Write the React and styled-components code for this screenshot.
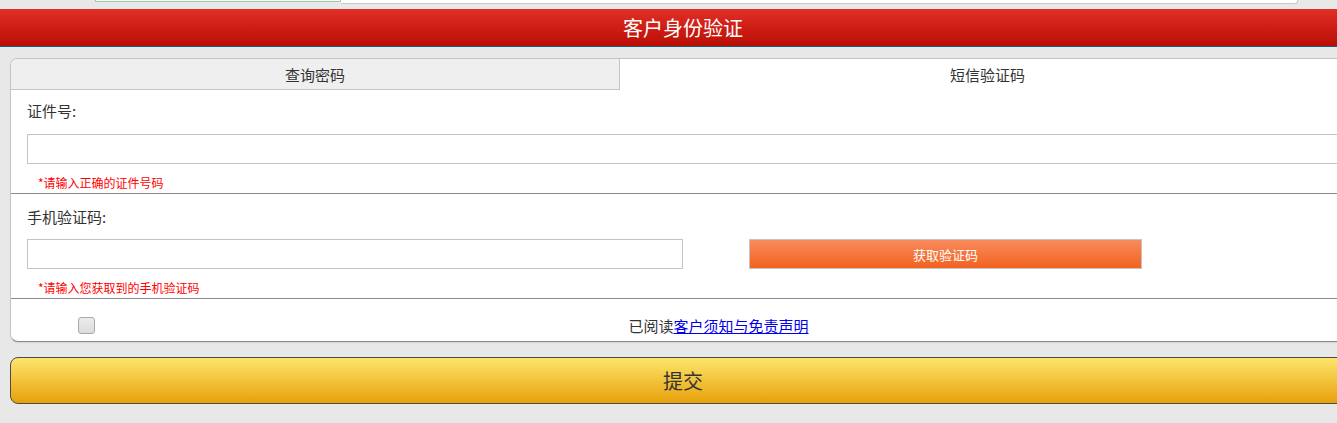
import React from 'react';
import styled, { createGlobalStyle } from 'styled-components';

const GlobalStyle = createGlobalStyle`
  html, body {
    margin: 0;
    padding: 0;
    background: #e8e8e8;
    overflow: hidden;
  }
  body {
    font-family: "Noto Sans CJK SC", "Liberation Sans", sans-serif;
    color: #333;
  }
`;

const Page = styled.div`
  width: 1366px;
`;

const TopStrip = styled.div`
  height: 9px;
  display: flex;
  align-items: flex-start;
  padding-left: 95px;
`;

const SearchBox = styled.div`
  width: 244px;
  height: 1px;
  border: 1px solid #9fd09a;
  border-top: none;
  background: #fff;
`;

const NavBox = styled.div`
  width: 956px;
  height: 3px;
  background: #fff;
  border-bottom: 1px solid #c8c8c8;
  border-right: 1px solid #c8c8c8;
  border-bottom-right-radius: 3px;
`;

const Header = styled.div`
  height: 37px;
  background: linear-gradient(#e12f26, #ba0e04);
  border-bottom: 1px solid #1a5d7c;
  color: #fff;
  font-size: 20px;
  display: flex;
  align-items: center;
  justify-content: center;
`;

const Content = styled.div`
  padding: 11px 10px 0;
`;

const Card = styled.div`
  background: #fff;
  border: 1px solid #c4c4c4;
  border-bottom-color: #888;
  border-radius: 7px 7px 8px 8px;
  box-shadow: 0 1px 1px rgba(0, 0, 0, 0.08);
  overflow: hidden;
`;

const Tabs = styled.div`
  display: flex;
  height: 31px;
`;

const Tab = styled.div`
  width: ${p => p.width || 'auto'};
  flex: ${p => (p.width ? 'none' : 1)};
  background: ${p => (p.active ? '#fff' : '#efefef')};
  border-bottom: ${p => (p.active ? 'none' : '1px solid #c4c4c4')};
  border-right: ${p => (p.active ? 'none' : '1px solid #c4c4c4')};
  font-size: 15px;
  display: flex;
  align-items: center;
  justify-content: center;
`;

const Section = styled.div`
  padding: ${p => p.pad || '12px'} 0 2px 16px;
  border-bottom: 1px solid #8a8a8a;
`;

const Label = styled.div`
  font-size: 15px;
  line-height: 20px;
  height: 20px;
`;

const Row = styled.div`
  display: flex;
  align-items: center;
  margin-top: ${p => p.mt || '12px'};
`;

const Input = styled.input`
  box-sizing: border-box;
  width: ${p => p.width || '1340px'};
  height: 30px;
  border: 1px solid #c4c4c4;
  background: #fff;
  outline: none;
  padding: 0 6px;
  font-size: 14px;
`;

const CodeButton = styled.button`
  box-sizing: border-box;
  margin-left: 66px;
  width: 393px;
  height: 30px;
  border: 1px solid #c4c4c4;
  background: linear-gradient(#f88b5c, #f3621f);
  color: #fff;
  font-family: inherit;
  font-size: 13px;
  cursor: pointer;
`;

const Hint = styled.div`
  margin: ${p => p.mt || '12px'} 0 0 11px;
  color: #ff0000;
  font-size: 12px;
  line-height: 16px;
`;

const AgreeRow = styled.div`
  display: flex;
  align-items: center;
  padding: 18px 0 7px 67px;
`;

const CheckBox = styled.span`
  box-sizing: border-box;
  width: 17px;
  height: 17px;
  border: 1px solid #a8a8a8;
  border-radius: 3px;
  background: linear-gradient(#ececec, #dcdcdc);
`;

const AgreeText = styled.div`
  flex: 1;
  text-align: center;
  font-size: 15px;
  line-height: 16px;
  padding-right: 13px;
`;

const Link = styled.a`
  color: #0000ee;
  text-decoration: underline;
`;

const Submit = styled.button`
  box-sizing: border-box;
  margin-top: 15px;
  width: 100%;
  height: 47px;
  border: 1px solid #4a4a4a;
  border-radius: 8px;
  background: linear-gradient(#fde66c, #e8a00b);
  color: #333;
  font-family: inherit;
  font-size: 20px;
  cursor: pointer;
`;

export default function App() {
  return (
    <Page>
      <GlobalStyle />
      <TopStrip>
        <SearchBox />
        <NavBox />
      </TopStrip>
      <Header>客户身份验证</Header>
      <Content>
        <Card>
          <Tabs>
            <Tab width="608px">查询密码</Tab>
            <Tab active>短信验证码</Tab>
          </Tabs>
          <Section pad="11px">
            <Label>证件号:</Label>
            <Row mt="13px">
              <Input />
            </Row>
            <Hint mt="11px">*请输入正确的证件号码</Hint>
          </Section>
          <Section pad="13px">
            <Label>手机验证码:</Label>
            <Row mt="12px">
              <Input width="656px" />
              <CodeButton>获取验证码</CodeButton>
            </Row>
            <Hint mt="11px">*请输入您获取到的手机验证码</Hint>
          </Section>
          <AgreeRow>
            <CheckBox />
            <AgreeText>
              已阅读<Link href="#">客户须知与免责声明</Link>
            </AgreeText>
          </AgreeRow>
        </Card>
        <Submit>提交</Submit>
      </Content>
    </Page>
  );
}
